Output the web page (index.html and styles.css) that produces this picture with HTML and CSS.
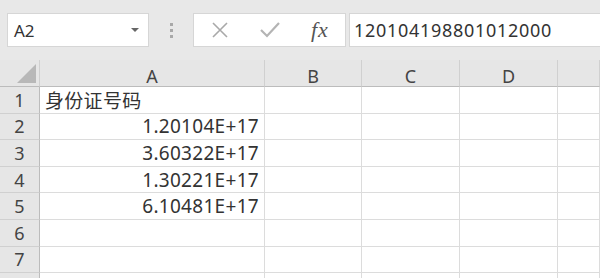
FILE: index.html
```html
<!DOCTYPE html>
<html lang="zh-CN">
<head>
    <meta charset="UTF-8">
    <link rel="stylesheet" href="styles.css">
    <title>身份证号码</title>
</head>
<body>
    <div class="toolbar">
        <div class="namebox">
            <span>A2</span>
            <span class="caret"></span>
        </div>
        <div class="grip"><i></i><i></i><i></i></div>
        <div class="fbuttons">
            <svg class="ico" width="20" height="20" viewBox="0 0 20 20">
                <path d="M3 3 L17 17 M17 3 L3 17" stroke="#a9a9a9" stroke-width="1.6" fill="none"/>
            </svg>
            <svg class="ico" width="22" height="20" viewBox="0 0 22 20">
                <path d="M2 10 L8 16 L20 3" stroke="#b4b4b4" stroke-width="2.2" fill="none"/>
            </svg>
            <span class="fx">fx</span>
        </div>
        <div class="formula">120104198801012000</div>
    </div>

    <div class="sheet">
        <div class="corner"><span class="tri"></span></div>
        <div class="colhead">A</div>
        <div class="colhead">B</div>
        <div class="colhead">C</div>
        <div class="colhead">D</div>
        <div class="colhead"></div>

        <div class="rowhead">1</div>
        <div class="cell">身份证号码</div>
        <div class="cell"></div><div class="cell"></div><div class="cell"></div><div class="cell"></div>

        <div class="rowhead">2</div>
        <div class="cell num">1.20104E+17</div>
        <div class="cell"></div><div class="cell"></div><div class="cell"></div><div class="cell"></div>

        <div class="rowhead">3</div>
        <div class="cell num">3.60322E+17</div>
        <div class="cell"></div><div class="cell"></div><div class="cell"></div><div class="cell"></div>

        <div class="rowhead">4</div>
        <div class="cell num">1.30221E+17</div>
        <div class="cell"></div><div class="cell"></div><div class="cell"></div><div class="cell"></div>

        <div class="rowhead">5</div>
        <div class="cell num">6.10481E+17</div>
        <div class="cell"></div><div class="cell"></div><div class="cell"></div><div class="cell"></div>

        <div class="rowhead">6</div>
        <div class="cell"></div>
        <div class="cell"></div><div class="cell"></div><div class="cell"></div><div class="cell"></div>

        <div class="rowhead">7</div>
        <div class="cell"></div>
        <div class="cell"></div><div class="cell"></div><div class="cell"></div><div class="cell"></div>

        <!-- row 8 is only a sliver at the bottom edge -->
        <div class="rowhead"></div>
        <div class="cell"></div>
        <div class="cell"></div><div class="cell"></div><div class="cell"></div><div class="cell"></div>
    </div>
</body>
</html>
```

FILE: styles.css
```css
body {
    margin: 0;
    width: 600px;
    height: 278px;
    overflow: hidden;
    background-color: #e8e8e8;
    font-family: "Noto Sans", "Noto Sans CJK SC", sans-serif;
    color: #333;
}

/* formula bar */
.toolbar {
    display: flex;
    align-items: center;
    height: 60px;
    padding-left: 7px;
    box-sizing: border-box;
}

.namebox {
    display: flex;
    align-items: center;
    justify-content: space-between;
    width: 142px;
    height: 34px;
    box-sizing: border-box;
    padding: 0 9px 0 6px;
    background-color: #fff;
    border: 1px solid #d6d6d6;
    font-size: 17px;
    color: #333;
}

.caret {
    width: 0;
    height: 0;
    border-left: 4px solid transparent;
    border-right: 4px solid transparent;
    border-top: 4px solid #666;
}

.grip {
    display: flex;
    flex-direction: column;
    gap: 3px;
    width: 44px;
    align-items: center;
}

.grip i {
    width: 3px;
    height: 3px;
    background-color: #a8a8a8;
}

.fbuttons {
    display: flex;
    align-items: center;
    width: 153px;
    height: 34px;
    box-sizing: border-box;
    padding-left: 16px;
    background-color: #fff;
    border: 1px solid #d6d6d6;
}

.ico {
    display: block;
}

.fbuttons .ico + .ico {
    margin-left: 29px;
}

.fx {
    margin-left: 30px;
    font-family: "Liberation Serif", serif;
    font-style: italic;
    font-size: 22px;
    color: #555;
    letter-spacing: 1px;
}

.formula {
    flex: 1;
    height: 34px;
    margin-left: 3px;
    box-sizing: border-box;
    padding-left: 4px;
    background-color: #fff;
    border: 1px solid #d6d6d6;
    border-right: none;
    font-size: 18px;
    letter-spacing: 0.7px;
    line-height: 32px;
    color: #333;
}

/* grid */
.sheet {
    display: grid;
    grid-template-columns: 40px 225px 97px 98px 98px 1fr;
    grid-template-rows: 27px repeat(7, 26.6px) 20px;
    background-color: #fff;
}

.corner,
.colhead {
    position: relative;
    background-color: #e6e6e6;
    border-bottom: 1px solid #bcbcbc;
    border-right: 1px solid #d0d0d0;
    box-sizing: border-box;
}

.corner .tri {
    position: absolute;
    right: 3px;
    bottom: 3px;
    width: 0;
    height: 0;
    border-left: 19px solid transparent;
    border-bottom: 19px solid #b8b8b8;
}

.colhead {
    display: flex;
    align-items: center;
    justify-content: center;
    padding-top: 5px;
    font-size: 18px;
    color: #444;
}

.rowhead {
    display: flex;
    align-items: center;
    justify-content: center;
    background-color: #e6e6e6;
    border-right: 1px solid #bcbcbc;
    border-bottom: 1px solid #d0d0d0;
    box-sizing: border-box;
    font-size: 18px;
    color: #444;
}

.cell {
    display: flex;
    align-items: center;
    padding: 0 5px;
    border-right: 1px solid #dcdcdc;
    border-bottom: 1px solid #dcdcdc;
    box-sizing: border-box;
    font-size: 19px;
    letter-spacing: 0.3px;
    white-space: nowrap;
    color: #333;
}

.num {
    justify-content: flex-end;
}
```
